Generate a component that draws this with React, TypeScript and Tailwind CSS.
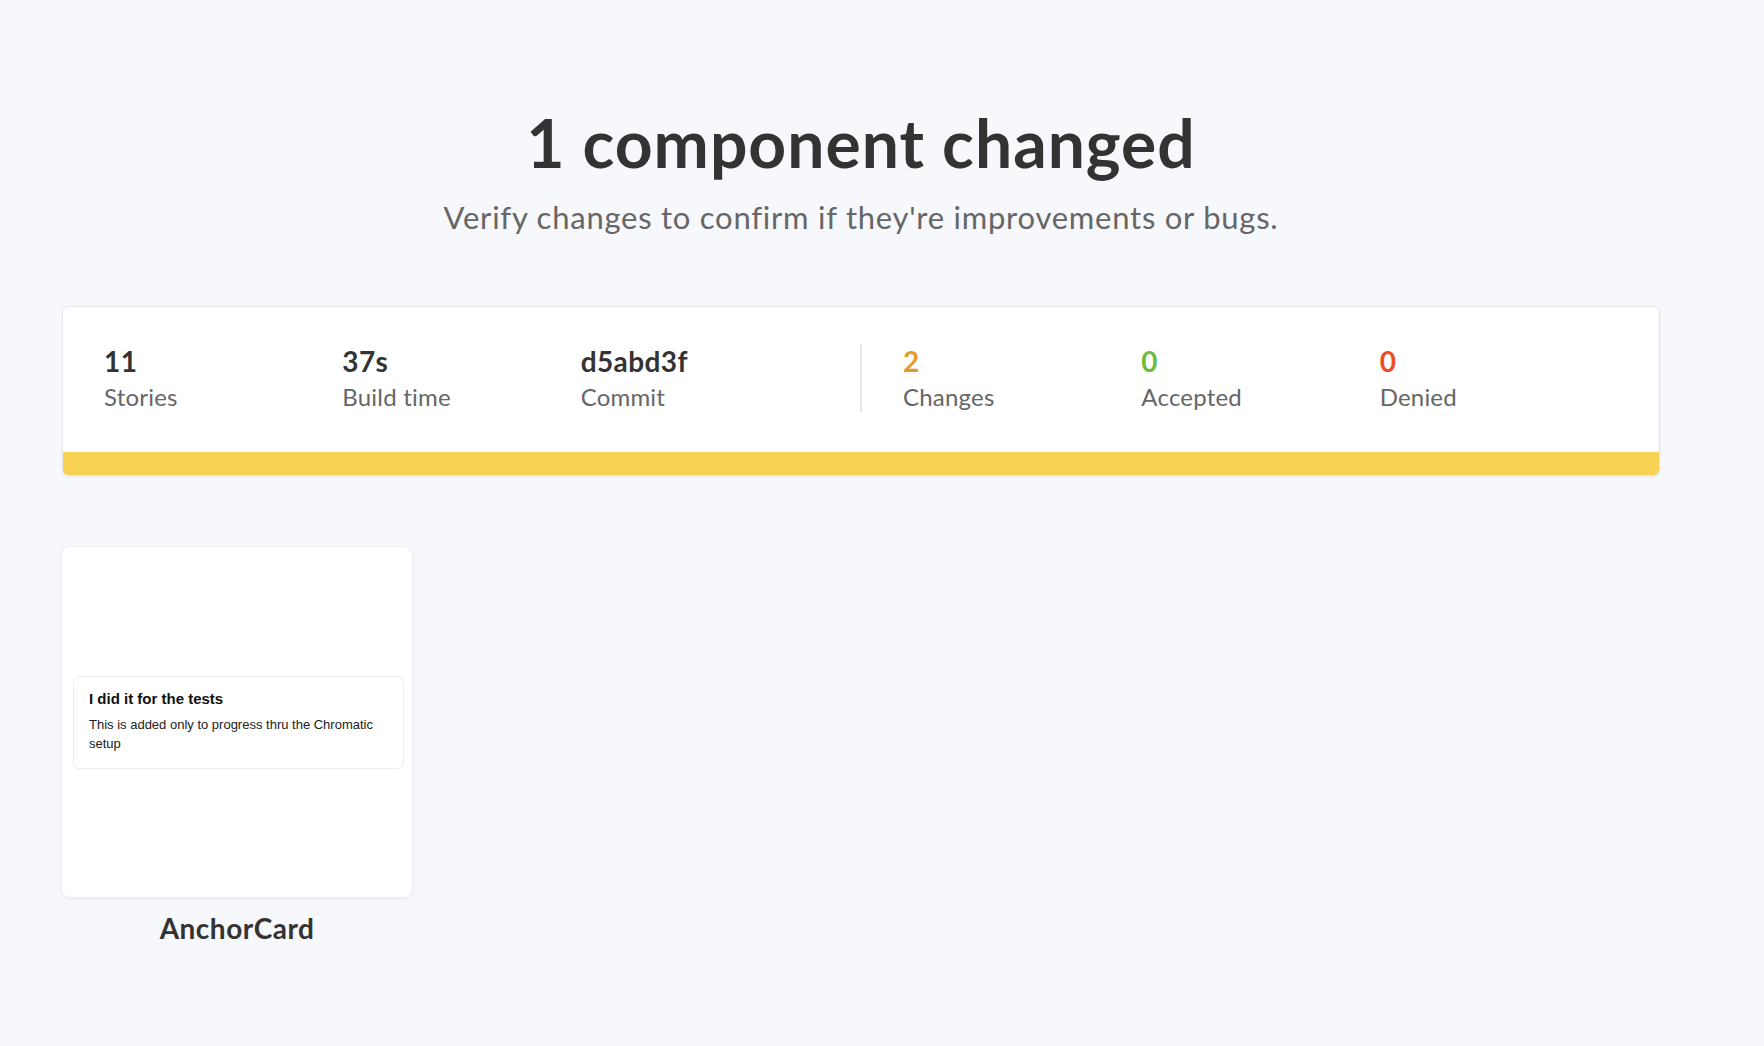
import React from "react";

const stats = [
  { value: "11", label: "Stories", color: "text-[#333333]" },
  { value: "37s", label: "Build time", color: "text-[#333333]" },
  { value: "d5abd3f", label: "Commit", color: "text-[#333333]" },
];

const reviews = [
  { value: "2", label: "Changes", color: "text-[#e39b2f]" },
  { value: "0", label: "Accepted", color: "text-[#6bbd3f]" },
  { value: "0", label: "Denied", color: "text-[#f04c23]" },
];

function Stat({ value, label, color }: { value: string; label: string; color: string }) {
  return (
    <div className="flex flex-col">
      <span className={`text-[28px] font-bold leading-[34px] tracking-[0.4px] ${color}`}>{value}</span>
      <span className="mt-[4px] text-[24px] leading-[30px] tracking-[0.2px] text-[#666666]">{label}</span>
    </div>
  );
}

export default function App() {
  return (
    <main className="min-h-screen bg-[#f6f8fc] font-['Lato',sans-serif]">
      <div className="w-[1722px] px-[62px] pt-[105px]">
        <header className="text-center">
          <h1 className="text-[66px] font-bold leading-[76px] tracking-[1px] text-[#333333]">1 component changed</h1>
          <p className="mt-[18px] text-[31px] leading-[36px] tracking-[0.75px] text-[#666666]">
            Verify changes to confirm if they're improvements or bugs.
          </p>
        </header>

        <section className="mt-[71px] overflow-hidden rounded-[6px] border border-[#e3e6ea] bg-white shadow-[0_1px_3px_rgba(0,0,0,0.06)]">
          <div className="flex pb-[40px] pt-[37px]">
            <div className="grid flex-1 grid-cols-3 px-[41px]">
              {stats.map((s) => (
                <Stat key={s.label} {...s} />
              ))}
            </div>
            <div className="grid flex-1 grid-cols-3 border-l-2 border-[#e6e6e6] px-[41px]">
              {reviews.map((s) => (
                <Stat key={s.label} {...s} />
              ))}
            </div>
          </div>
          <div className="h-[23px] bg-[#f7d154]" />
        </section>

        <section className="mt-[71px] flex">
          <div className="flex w-[350px] flex-col items-center">
            <div className="flex h-[350px] w-[350px] items-center rounded-[8px] bg-white pl-[11px] pr-[8px] shadow-[0_1px_4px_rgba(0,0,0,0.08)]">
              <div className="w-full rounded-[6px] border border-[#ededed] px-[15px] pb-[15px] pt-[12px] font-['Liberation_Sans',Arial,sans-serif]">
                <div className="text-[15px] font-bold leading-[20px] text-[#111111]">I did it for the tests</div>
                <p className="mt-[6px] text-[13px] leading-[19px] text-[#222222]">
                  This is added only to progress thru the Chromatic setup
                </p>
              </div>
            </div>
            <div className="mt-[14px] text-[28px] font-bold leading-[34px] tracking-[0.5px] text-[#333333]">AnchorCard</div>
          </div>
        </section>
      </div>
    </main>
  );
}
